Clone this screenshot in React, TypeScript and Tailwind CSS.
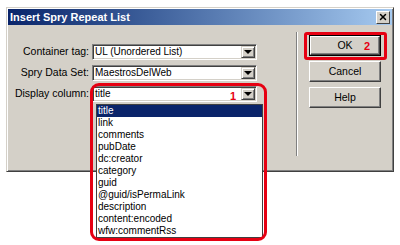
import { X } from 'lucide-react';

const rows = [
  { label: 'Container tag:', value: 'UL (Unordered List)' },
  { label: 'Spry Data Set:', value: 'MaestrosDelWeb' },
  { label: 'Display column:', value: 'title' },
];

const columns = [
  'title',
  'link',
  'comments',
  'pubDate',
  'dc:creator',
  'category',
  'guid',
  '@guid/isPermaLink',
  'description',
  'content:encoded',
  'wfw:commentRss',
];

function ArrowButton() {
  return (
    <div
      className="w-[14px] h-full flex items-center justify-center bg-[#d4d0c8]
                 border border-t-[#d4d0c8] border-l-[#d4d0c8] border-r-[#404040] border-b-[#404040]
                 shadow-[inset_1px_1px_0_#fff,inset_-1px_-1px_0_#808080]"
    >
      <div className="w-0 h-0 border-l-[4px] border-r-[4px] border-t-[4px] border-l-transparent border-r-transparent border-t-black" />
    </div>
  );
}

function SelectBox({ value }: { value: string }) {
  return (
    <div
      className="w-[165px] h-[16px] flex items-stretch bg-white
                 border border-t-[#808080] border-l-[#808080] border-r-white border-b-white
                 shadow-[inset_1px_1px_0_#404040,inset_-1px_-1px_0_#d4d0c8] p-[1px]"
    >
      <span className="flex-1 pl-[1px] text-[10px] leading-[12px] text-black">{value}</span>
      <ArrowButton />
    </div>
  );
}

function DlgButton({ label, isDefault }: { label: string; isDefault?: boolean }) {
  return (
    <div className={isDefault ? 'border border-black' : ''}>
      <div
        className={`${isDefault ? 'h-[19px] w-[70px]' : 'h-[21px] w-[72px]'} flex items-center justify-center bg-[#d4d0c8]
                   border border-t-white border-l-white border-r-[#404040] border-b-[#404040]
                   shadow-[inset_-1px_-1px_0_#808080] text-[10.5px] text-black`}
      >
        {label}
      </div>
    </div>
  );
}

export default function App() {
  return (
    <div className="relative w-[400px] h-[245px] bg-white overflow-hidden font-['Liberation_Sans',Arial,sans-serif]">
      <div className="pt-[7px] pl-[6px]">
        <div
          className="w-[388px] h-[165px] flex flex-col bg-[#d4d0c8] p-[1px]
                     border border-t-[#d4d0c8] border-l-[#d4d0c8] border-r-[#404040] border-b-[#404040]
                     shadow-[inset_1px_1px_0_#fff,inset_-1px_-1px_0_#808080]"
        >
          {/* Title bar */}
          <div className="h-[16px] flex items-center justify-between pl-[2px] pr-[2px] bg-gradient-to-r from-[#0a246a] to-[#a6caf0]">
            <span className="text-[11px] font-bold text-white leading-none">Insert Spry Repeat List</span>
            <div
              className="w-[14px] h-[13px] flex items-center justify-center bg-[#d4d0c8]
                         border border-t-white border-l-white border-r-[#404040] border-b-[#404040]"
            >
              <X size={10} strokeWidth={3.5} color="#000" />
            </div>
          </div>

          {/* Body */}
          <div className="flex flex-1">
            <div className="w-[288px] pt-[19px] flex flex-col gap-[5px]">
              {rows.map((r) => (
                <div key={r.label} className="flex items-center">
                  <span className="w-[84px] pr-[3px] text-right text-[10.5px] text-black whitespace-nowrap">
                    {r.label}
                  </span>
                  <SelectBox value={r.value} />
                </div>
              ))}
            </div>
            <div className="mt-[7px] h-[124px] w-[2px] border-l border-l-[#808080] border-r border-r-white" />
            <div className="pl-[11px] pt-[10px] flex flex-col gap-[5px]">
              <DlgButton label="OK" isDefault />
              <DlgButton label="Cancel" />
              <DlgButton label="Help" />
            </div>
          </div>
        </div>
      </div>

      {/* Open dropdown list */}
      <div className="absolute left-[96px] top-[104px] w-[167px] border border-[#404040] bg-white">
        {columns.map((c, i) => (
          <div
            key={c}
            className={`h-[12px] pl-[1px] text-[10px] leading-[12px] ${
              i === 0 ? 'bg-[#0a246a] text-white' : 'text-black'
            }`}
          >
            {c}
          </div>
        ))}
      </div>

      {/* Annotations */}
      <div className="absolute left-[90px] top-[83px] w-[177px] h-[158px] border-[3px] border-[#e60012] rounded-[9px]" />
      <span className="absolute left-[230px] top-[88px] text-[11px] font-bold text-[#e60012]">1</span>
      <div className="absolute left-[304px] top-[32px] w-[83px] h-[28px] border-[3px] border-[#e60012] rounded-[3px]" />
      <span className="absolute left-[364px] top-[38px] text-[11px] font-bold text-[#e60012]">2</span>
    </div>
  );
}
